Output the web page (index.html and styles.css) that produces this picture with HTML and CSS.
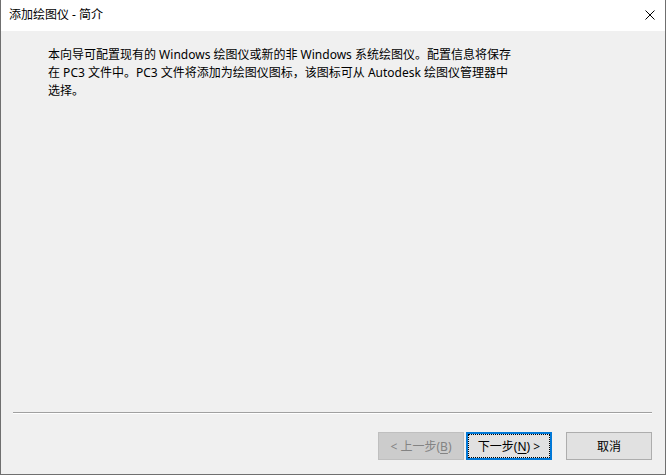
FILE: index.html
```html
<!DOCTYPE html>
<html lang="zh-CN">
<head>
<meta charset="utf-8">
<title>添加绘图仪 - 简介</title>
<link rel="stylesheet" href="styles.css">
</head>
<body>
<div class="window">
  <div class="titlebar">
    <span class="title">添加绘图仪 - 简介</span>
    <svg class="close" width="10" height="10" viewBox="0 0 10 10">
      <path d="M0.5 0.5 L9.5 9.5 M9.5 0.5 L0.5 9.5" stroke="#000" stroke-width="1" fill="none"/>
    </svg>
  </div>
  <div class="content">
    <p class="intro">本向导可配置现有的 Windows 绘图仪或新的非 Windows 系统绘图仪。配置信息将保存<br>在 PC3 文件中。PC3 文件将添加为绘图仪图标，该图标可从 Autodesk 绘图仪管理器中<br>选择。</p>
  </div>
  <div class="footer">
    <div class="separator"></div>
    <div class="buttons">
      <button class="btn btn-disabled" disabled>&lt; 上一步(<u>B</u>)</button>
      <button class="btn btn-default">下一步(<u>N</u>) &gt;</button>
      <button class="btn btn-cancel">取消</button>
    </div>
  </div>
</div>
</body>
</html>
```

FILE: styles.css
```css
* { box-sizing: border-box; }

html, body {
  margin: 0;
  padding: 0;
  width: 666px;
  height: 475px;
  overflow: hidden;
}

body {
  font-family: "Noto Sans", "Noto Sans CJK SC", sans-serif;
  font-size: 12px;
  color: #000;
}

.window {
  width: 666px;
  height: 475px;
  display: flex;
  flex-direction: column;
  background: #f0f0f0;
  border: 1px solid #6f6f6f;
  border-top: none;
}

.titlebar {
  height: 31px;
  flex: none;
  background: #fff;
  display: flex;
  align-items: center;
  justify-content: space-between;
  padding: 0 10px 1px 8px;
}

.title {
  font-size: 12px;
  line-height: 16px;
}

.close {
  display: block;
}

.content {
  flex: 1;
  padding: 15px 0 0 47px;
}

.intro {
  margin: 0;
  line-height: 18px;
  white-space: nowrap;
}

.footer {
  flex: none;
  padding: 0 13px 14px 12px;
}

.separator {
  height: 2px;
  border-top: 1px solid #a0a0a0;
  border-bottom: 1px solid #ffffff;
}

.buttons {
  display: flex;
  justify-content: flex-end;
  margin-top: 18px;
}

.btn {
  width: 86px;
  height: 28px;
  margin: 0;
  padding: 0;
  font-family: "Noto Sans", "Noto Sans CJK SC", sans-serif;
  font-size: 12px;
  color: #000;
  background: #e1e1e1;
  border: 1px solid #adadad;
  border-radius: 0;
}

.btn u {
  text-decoration: underline;
  text-underline-offset: 2px;
}

.btn-disabled {
  background: #cccccc;
  border-color: #bfbfbf;
  color: #838383;
}

.btn-default {
  margin-left: 2px;
  border: 2px solid #0078d7;
  outline: 1px dotted #000;
  outline-offset: -3px;
}

.btn-cancel {
  margin-left: 14px;
}
```
